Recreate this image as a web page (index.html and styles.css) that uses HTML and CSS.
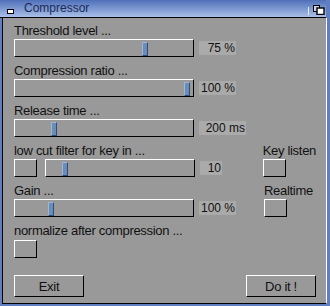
FILE: index.html
```html
<!DOCTYPE html>
<html lang="en">
<head>
    <meta charset="UTF-8">
    <title>Compressor</title>
    <link rel="stylesheet" href="styles.css">
</head>
<body>
    <div class="window">
        <div class="titlebar">
            <span class="close-gadget"></span>
            <span class="title">Compressor</span>
            <span class="sep"></span>
            <svg class="depth-gadget" width="12" height="10" viewBox="0 0 12 10">
                <rect x="0.5" y="0.5" width="6" height="6" fill="#c8d3ea" stroke="#000"/>
                <rect x="4" y="3" width="7" height="6.5" fill="#fff" stroke="#000" stroke-width="1.4"/>
            </svg>
        </div>
        <div class="frame">
            <div class="panel">
                <div class="group">
                    <div class="label">Threshold level ...</div>
                    <div class="row">
                        <div class="slider wide"><span class="knob" style="left: 127px"></span></div>
                        <span class="value" style="width: 37px">75 %</span>
                    </div>
                </div>
                <div class="group">
                    <div class="label">Compression ratio ...</div>
                    <div class="row">
                        <div class="slider wide"><span class="knob" style="left: 169px"></span></div>
                        <span class="value" style="width: 37px">100 %</span>
                    </div>
                </div>
                <div class="group">
                    <div class="label">Release time ...</div>
                    <div class="row">
                        <div class="slider wide"><span class="knob" style="left: 36px"></span></div>
                        <span class="value" style="width: 47px">200 ms</span>
                    </div>
                </div>
                <div class="group split">
                    <div class="main">
                        <div class="label">low cut filter for key in ...</div>
                        <div class="row">
                            <span class="check"></span>
                            <div class="slider narrow"><span class="knob" style="left: 16px"></span></div>
                            <span class="value" style="width: 22px">10</span>
                        </div>
                    </div>
                    <div class="side">
                        <div class="label">Key listen</div>
                        <span class="check"></span>
                    </div>
                </div>
                <div class="group split">
                    <div class="main">
                        <div class="label">Gain ...</div>
                        <div class="row">
                            <div class="slider wide"><span class="knob" style="left: 33px"></span></div>
                            <span class="value" style="width: 37px">100 %</span>
                        </div>
                    </div>
                    <div class="side">
                        <div class="label">Realtime</div>
                        <span class="check"></span>
                    </div>
                </div>
                <div class="group last">
                    <div class="label">normalize after compression ...</div>
                    <span class="check"></span>
                </div>
                <div class="buttons">
                    <button class="btn">Exit</button>
                    <button class="btn">Do it !</button>
                </div>
            </div>
        </div>
    </div>
</body>
</html>
```

FILE: styles.css
```css
body {
    margin: 0;
    padding: 0;
    font-family: "Liberation Sans", Arial, sans-serif;
    color: #111111;
}
.window {
    width: 330px;
    height: 306px;
    background-color: #5f7fc2;
}
.titlebar {
    height: 17px;
    border-bottom: 1px solid #000000;
    background: linear-gradient(#4f70b9, #a9bfe9);
    display: flex;
    align-items: center;
    padding-left: 7px;
    margin-right: 4px;
}
.close-gadget {
    width: 5px;
    height: 3px;
    border: 1px solid #000000;
    background-color: #ffffff;
    margin-top: 5px;
}
.title {
    font-size: 12px;
    color: #1b2a55;
    margin-left: 10px;
    margin-top: -1px;
}
.sep {
    width: 1px;
    height: 8px;
    background-color: #e4ebf8;
    margin-left: auto;
    margin-top: 5px;
}
.depth-gadget {
    margin-left: 4px;
    margin-right: 1px;
    margin-top: 2px;
}
.frame {
    border-left: 2px solid #5f7fc2;
    border-right: 3px solid #5f7fc2;
    border-bottom: 2px solid #5f7fc2;
}
.panel {
    height: 280px;
    background-color: #999999;
    border-left: 1px solid #000000;
    border-right: 1px solid #ffffff;
    border-bottom: 1px solid #000000;
    padding: 5px 10px 0 11px;
}
.group {
    margin-bottom: 6px;
}
.label {
    font-size: 13px;
    letter-spacing: -0.3px;
    line-height: 16px;
    height: 16px;
    white-space: nowrap;
}
.row {
    display: flex;
    align-items: center;
    height: 18px;
}
.split {
    display: flex;
}
.main {
    width: 250px;
}
.slider {
    position: relative;
    height: 16px;
    border-top: 1px solid #ffffff;
    border-left: 1px solid #ffffff;
    border-bottom: 1px solid #000000;
    border-right: 1px solid #000000;
    box-sizing: content-box;
}
.slider.wide {
    width: 178px;
}
.slider.narrow {
    width: 148px;
    margin-left: 8px;
}
.knob {
    position: absolute;
    top: 2px;
    width: 4px;
    height: 12px;
    background-color: #6a8db7;
    border-left: 1px solid #9cb6d6;
    border-top: 1px solid #9cb6d6;
    border-right: 1px solid #2f4d75;
    border-bottom: 1px solid #2f4d75;
}
.value {
    height: 14px;
    line-height: 14px;
    margin-left: 5px;
    background-color: #aaaaaa;
    font-size: 12px;
    text-align: right;
    padding-right: 1px;
    box-sizing: border-box;
    white-space: nowrap;
}
.check {
    display: block;
    width: 21px;
    height: 16px;
    border-top: 1px solid #ffffff;
    border-left: 1px solid #ffffff;
    border-bottom: 1px solid #000000;
    border-right: 1px solid #000000;
}
.last .check {
    margin-top: 1px;
}
.buttons {
    display: flex;
    justify-content: space-between;
    margin-top: 17px;
}
.btn {
    width: 70px;
    height: 22px;
    padding: 0;
    background-color: #999999;
    border-top: 1px solid #ffffff;
    border-left: 1px solid #ffffff;
    border-bottom: 1px solid #000000;
    border-right: 1px solid #000000;
    font-family: "Liberation Sans", Arial, sans-serif;
    font-size: 13px;
    letter-spacing: -0.3px;
    color: #111111;
}
```
